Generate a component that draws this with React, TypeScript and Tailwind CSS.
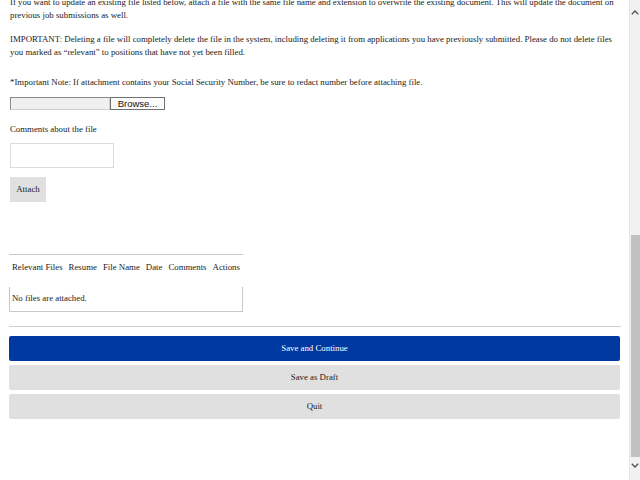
import React from "react";

function Chevron({ down }: { down?: boolean }) {
  return (
    <svg width="8" height="5" viewBox="0 0 8 5" className="block">
      {down ? (
        <path d="M0.8 0.8 L4 4 L7.2 0.8" fill="none" stroke="#505050" strokeWidth="1.3" />
      ) : (
        <path d="M0.8 4.2 L4 1 L7.2 4.2" fill="none" stroke="#505050" strokeWidth="1.3" />
      )}
    </svg>
  );
}

export default function App() {
  return (
    <div className="flex h-[480px] w-[640px] overflow-hidden bg-white font-['Liberation_Serif',serif] text-[8.8px] leading-[12.5px] text-[#222]">
      <div className="flex flex-1 flex-col pl-[9px] pr-[8px]">
        <p className="-mt-[4px] pl-px">
          If you want to update an existing file listed below, attach a file with the same file name and extension to overwrite the existing document. This will update the document on previous job submissions as well.
        </p>
        <p className="mt-[12px] pl-px">
          IMPORTANT: Deleting a file will completely delete the file in the system, including deleting it from applications you have previously submitted. Please do not delete files you marked as “relevant” to positions that have not yet been filled.
        </p>
        <p className="mt-[17.5px] pl-px">
          *Important Note: If attachment contains your Social Security Number, be sure to redact number before attaching file.
        </p>
        <div className="mt-[9px] flex h-[13px] pl-px font-['Liberation_Sans',sans-serif]">
          <div className="h-[13px] w-[100px] border border-[#8a8a8a] border-r-[#d0d0d0] border-b-[#d0d0d0] bg-[#f0f0f0]" />
          <div className="flex h-[13px] w-[55px] items-center justify-center border border-[#707070] bg-[#fbfbfb] text-[9.5px] leading-none text-[#111]">
            Browse...
          </div>
        </div>
        <div className="mt-[12.5px] pl-px">Comments about the file</div>
        <div className="ml-px mt-[8px] h-[25px] w-[104px] border border-[#dcdcdc] bg-white" />
        <div className="ml-px mt-[9px] flex h-[25px] w-[36px] items-center justify-center bg-[#e0e0e0]">
          Attach
        </div>
        <div className="mt-[52px] h-px w-[234px] bg-[#c8c8c8]" />
        <div className="mt-[6px] flex gap-[6px] pl-[3px] whitespace-nowrap">
          <span>Relevant Files</span>
          <span>Resume</span>
          <span>File Name</span>
          <span>Date</span>
          <span>Comments</span>
          <span>Actions</span>
        </div>
        <div className="mt-[13px] flex h-[25px] w-[234px] items-center border border-t-0 border-[#c8c8c8] pl-[2px]">
          No files are attached.
        </div>
        <div className="mt-[14px] h-px w-full bg-[#cfcfcf]" />
        <div className="mt-[9px] flex h-[25px] w-[611px] items-center justify-center rounded-[2px] bg-[#0039a0] text-white">
          Save and Continue
        </div>
        <div className="mt-[4px] flex h-[25px] w-[611px] items-center justify-center rounded-[2px] bg-[#e0e0e0]">
          Save as Draft
        </div>
        <div className="mt-[4.5px] flex h-[25px] w-[611px] items-center justify-center rounded-[2px] bg-[#e0e0e0]">
          Quit
        </div>
      </div>
      <div className="flex w-[11px] flex-col items-center border-l border-[#e6e6e6] bg-[#f1f1f1]">
        <div className="flex h-[235px] w-full flex-col items-center pt-[10px]">
          <Chevron />
        </div>
        <div className="h-[222px] w-[9px] bg-[#c1c1c1]" />
        <div className="flex w-full flex-1 flex-col items-center pt-[6px]">
          <Chevron down />
        </div>
      </div>
    </div>
  );
}
